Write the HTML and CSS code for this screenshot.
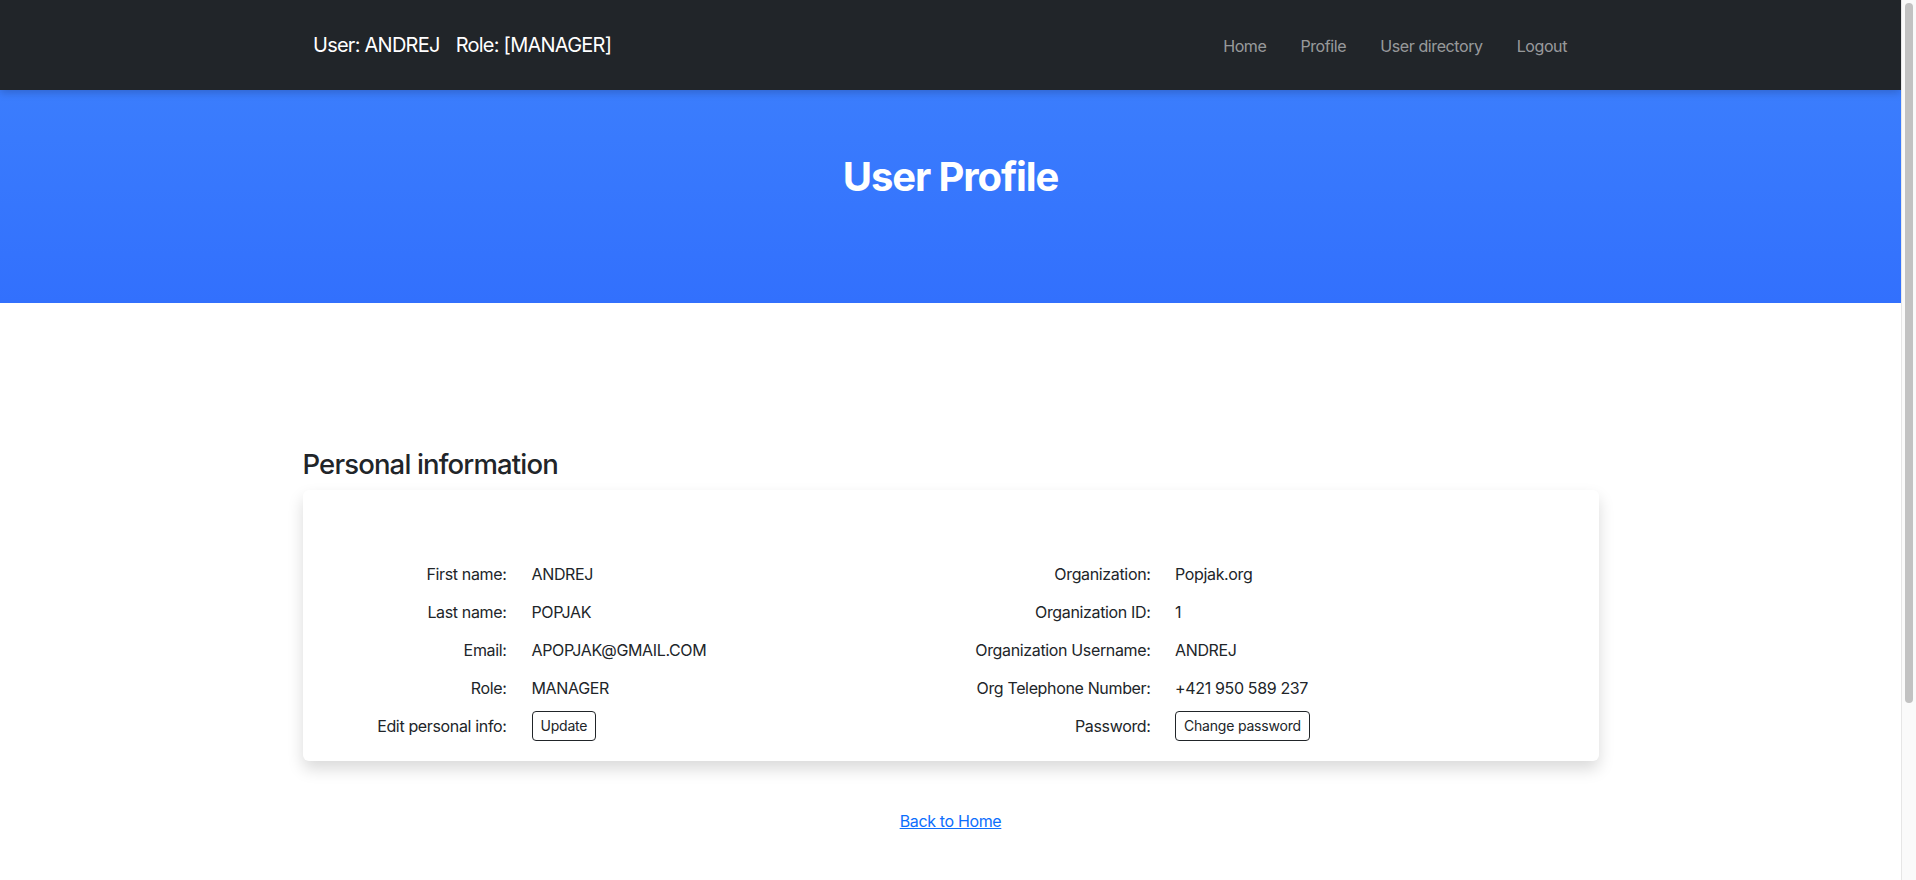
FILE: index.html
```html
<!DOCTYPE html>
<html lang="en">
<head>
<meta charset="utf-8">
<title>User Profile</title>
<link rel="stylesheet" href="styles.css">
</head>
<body>
<nav class="navbar">
  <div class="nav-inner">
    <div class="brand">
      <span class="brand-user">User: ANDREJ</span>
      <span class="brand-role">Role: [MANAGER]</span>
    </div>
    <ul class="nav-links">
      <li><a href="#">Home</a></li>
      <li><a href="#">Profile</a></li>
      <li><a href="#">User directory</a></li>
      <li><a href="#">Logout</a></li>
    </ul>
  </div>
</nav>
<header class="hero">
  <h1 class="hero-title">User Profile</h1>
</header>
<main class="content">
  <h3 class="section-title">Personal information</h3>
  <section class="card">
    <div class="info-col info-left">
      <div class="info-row"><span class="label">First name:</span><span class="value">ANDREJ</span></div>
      <div class="info-row"><span class="label">Last name:</span><span class="value">POPJAK</span></div>
      <div class="info-row"><span class="label">Email:</span><span class="value">APOPJAK@GMAIL.COM</span></div>
      <div class="info-row"><span class="label">Role:</span><span class="value">MANAGER</span></div>
      <div class="info-row"><span class="label">Edit personal info:</span><span class="value"><button class="btn">Update</button></span></div>
    </div>
    <div class="info-col info-right">
      <div class="info-row"><span class="label">Organization:</span><span class="value">Popjak.org</span></div>
      <div class="info-row"><span class="label">Organization ID:</span><span class="value">1</span></div>
      <div class="info-row"><span class="label">Organization Username:</span><span class="value">ANDREJ</span></div>
      <div class="info-row"><span class="label">Org Telephone Number:</span><span class="value">+421 950 589 237</span></div>
      <div class="info-row"><span class="label">Password:</span><span class="value"><button class="btn">Change password</button></span></div>
    </div>
  </section>
  <div class="back"><a href="#">Back to Home</a></div>
</main>
<div class="scrollbar" aria-hidden="true"><div class="scroll-thumb"></div></div>
</body>
</html>
```
FILE: styles.css
```css
* { box-sizing: border-box; }

html, body {
  margin: 0;
  padding: 0;
}

body {
  font-family: Inter, "Liberation Sans", sans-serif;
  font-size: 16px;
  line-height: 24px;
  letter-spacing: -0.35px;
  color: #212529;
  background: #ffffff;
  padding-right: 15px;
  overflow: hidden;
}

.navbar {
  background: #212529;
  height: 90px;
  position: relative;
  z-index: 2;
  box-shadow: 0 3px 8px rgba(0, 0, 0, 0.18);
}

.nav-inner {
  width: 1296px;
  margin: 0 auto;
  padding: 30px 31.5px 0 10.5px;
  display: flex;
  align-items: baseline;
  justify-content: space-between;
}

.brand {
  display: flex;
  gap: 16px;
  font-size: 20px;
  line-height: 30px;
  color: #ffffff;
  letter-spacing: -0.75px;
}

.nav-links {
  list-style: none;
  margin: 0;
  padding: 0;
  display: flex;
  gap: 34px;
}

.nav-links a {
  color: rgba(255, 255, 255, 0.55);
  text-decoration: none;
  font-size: 16px;
  line-height: 24px;
  letter-spacing: -0.4px;
}

.hero {
  background: linear-gradient(180deg, #3b7dfd 0%, #3270fd 100%);
  height: 213px;
  padding-top: 63px;
  text-align: center;
}

.hero-title {
  margin: 0;
  color: #ffffff;
  font-size: 40px;
  line-height: 48px;
  font-weight: 700;
  letter-spacing: -1.1px;
}

.content {
  width: 1296px;
  margin: 0 auto;
  padding: 145px 0 47px;
}

.section-title {
  margin: 0 0 8px;
  font-size: 27.5px;
  line-height: 33.6px;
  font-weight: 500;
  letter-spacing: -0.85px;
}

.card {
  background: #ffffff;
  border-radius: 6px;
  box-shadow: 0 8px 16px rgba(0, 0, 0, 0.15);
  padding: 65px 0 16px;
  display: grid;
  grid-template-columns: 1fr 1fr;
}

.info-col {
  display: grid;
  grid-auto-rows: 38px;
}

.info-left .info-row {
  grid-template-columns: 204px 1fr;
  column-gap: 25px;
}

.info-right .info-row {
  grid-template-columns: 200px 1fr;
  column-gap: 24.5px;
}

.info-row {
  display: grid;
  align-items: center;
}

.label {
  text-align: right;
  white-space: nowrap;
}

.value {
  white-space: nowrap;
}

.btn {
  font-family: inherit;
  font-size: 14px;
  line-height: 20px;
  letter-spacing: -0.2px;
  padding: 4px 8px;
  color: #212529;
  background: #ffffff;
  border: 1px solid #212529;
  border-radius: 4px;
  cursor: pointer;
  vertical-align: middle;
}

.back {
  margin-top: 48px;
  text-align: center;
}

.back a {
  color: #0d6efd;
  text-decoration: underline;
}

.scrollbar {
  position: fixed;
  top: 0;
  right: 0;
  width: 15px;
  height: 100vh;
  background: #fafafa;
  border-left: 1px solid #e6e6e6;
  z-index: 10;
  display: flex;
  justify-content: center;
  padding-top: 3px;
}

.scroll-thumb {
  width: 8px;
  height: 700px;
  border-radius: 4px;
  background: #c2c2c2;
}
```
